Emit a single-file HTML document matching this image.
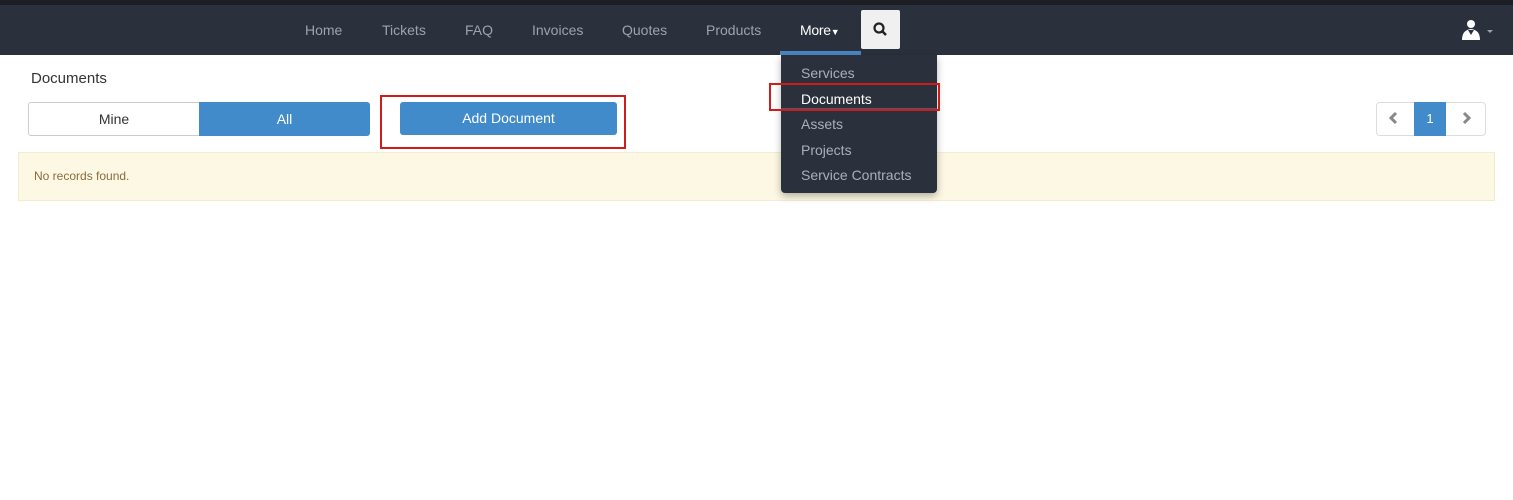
<!DOCTYPE html>
<html><head><style>
body{margin:0;width:1513px;height:500px;background:#fff;font-family:"Liberation Sans",sans-serif;position:relative;overflow:hidden}
.top{position:absolute;left:0;top:0;width:1513px;height:5px;background:#1c1e24}
.nav{position:absolute;left:0;top:5px;width:1513px;height:50px;background:#2b313c}
.nav a{position:absolute;top:17px;font-size:14px;color:#9ba3ad}
.abs{position:absolute}
</style></head><body>
<div class="top"></div>
<div class="nav">
<a style="left:305px">Home</a><a style="left:382px">Tickets</a><a style="left:465px">FAQ</a><a style="left:532px">Invoices</a><a style="left:622px">Quotes</a><a style="left:706px">Products</a>
<a style="left:800px;color:#fff;letter-spacing:-0.3px">More<span style="font-size:9px">▼</span></a>
<div class="abs" style="left:780px;top:46px;width:81px;height:4px;background:#4a88c0"></div>
<div class="abs" style="left:861px;top:5px;width:39px;height:39px;background:#f0f0f0;border-radius:2px">
<svg width="39" height="39"><circle cx="18" cy="18" r="4.5" stroke="#222" stroke-width="2.2" fill="none"/><line x1="21" y1="21" x2="25" y2="25" stroke="#222" stroke-width="2.5"/></svg></div>
<svg class="abs" style="left:1460px;top:14px" width="36" height="24"><circle cx="11" cy="5" r="4" fill="#fff"/><path d="M2 21 Q2 11 11 10 Q20 11 20 21Z" fill="#fff"/><path d="M8 11 L11 16 L14 11Z" fill="#2b313c"/><path d="M27 11 L33 11 L30 14Z" fill="#9ba3ad"/></svg>
</div>
<div class="abs" style="left:31px;top:70px;font-size:15px;color:#333">Documents</div>
<div class="abs" style="left:28px;top:102px;width:170px;height:32px;border:1px solid #ccc;border-radius:3px 0 0 3px;text-align:center;line-height:32px;font-size:14px;color:#333">Mine</div>
<div class="abs" style="left:199px;top:102px;width:171px;height:34px;background:#428bca;border-radius:0 3px 3px 0;text-align:center;line-height:34px;font-size:14px;color:#fff">All</div>
<div class="abs" style="left:400px;top:102px;width:217px;height:33px;background:#428bca;border-radius:3px;text-align:center;line-height:33px;font-size:14px;color:#fff">Add Document</div>
<div class="abs" style="left:380px;top:95px;width:242px;height:50px;border:2px solid #d01b1b"></div>
<div class="abs" style="left:18px;top:152px;width:1475px;height:47px;background:#fcf8e3;border:1px solid #f5ecd0;font-size:12px;color:#8a6d3b;line-height:47px;text-indent:15px">No records found.</div>
<div class="abs" style="left:1376px;top:102px;width:108px;height:32px;border:1px solid #ddd;border-radius:4px"></div>
<div class="abs" style="left:1414px;top:102px;width:32px;height:34px;background:#428bca;color:#fff;font-size:13px;text-align:center;line-height:34px">1</div>
<svg class="abs" style="left:1388px;top:111px" width="12" height="16"><path d="M8 2 L3 7 L8 12" stroke="#888" stroke-width="3" fill="none"/></svg>
<svg class="abs" style="left:1461px;top:111px" width="12" height="16"><path d="M3 2 L8 7 L3 12" stroke="#888" stroke-width="3" fill="none"/></svg>
<div class="abs" style="left:781px;top:55px;width:156px;height:138px;background:#2b313c;border-radius:0 0 4px 4px;box-shadow:0 3px 8px rgba(0,0,0,.3);font-size:14px;color:#a9b0b8">
<div class="abs" style="left:20px;top:10px">Services</div>
<div class="abs" style="left:20px;top:36px;color:#fff">Documents</div>
<div class="abs" style="left:0;top:53px;width:156px;height:2px;background:#4a5a7a"></div>
<div class="abs" style="left:20px;top:61px">Assets</div>
<div class="abs" style="left:20px;top:87px">Projects</div>
<div class="abs" style="left:20px;top:112px">Service Contracts</div>
</div>
<div class="abs" style="left:769px;top:83px;width:167px;height:24px;border:2px solid #d01b1b"></div>
</body></html>
